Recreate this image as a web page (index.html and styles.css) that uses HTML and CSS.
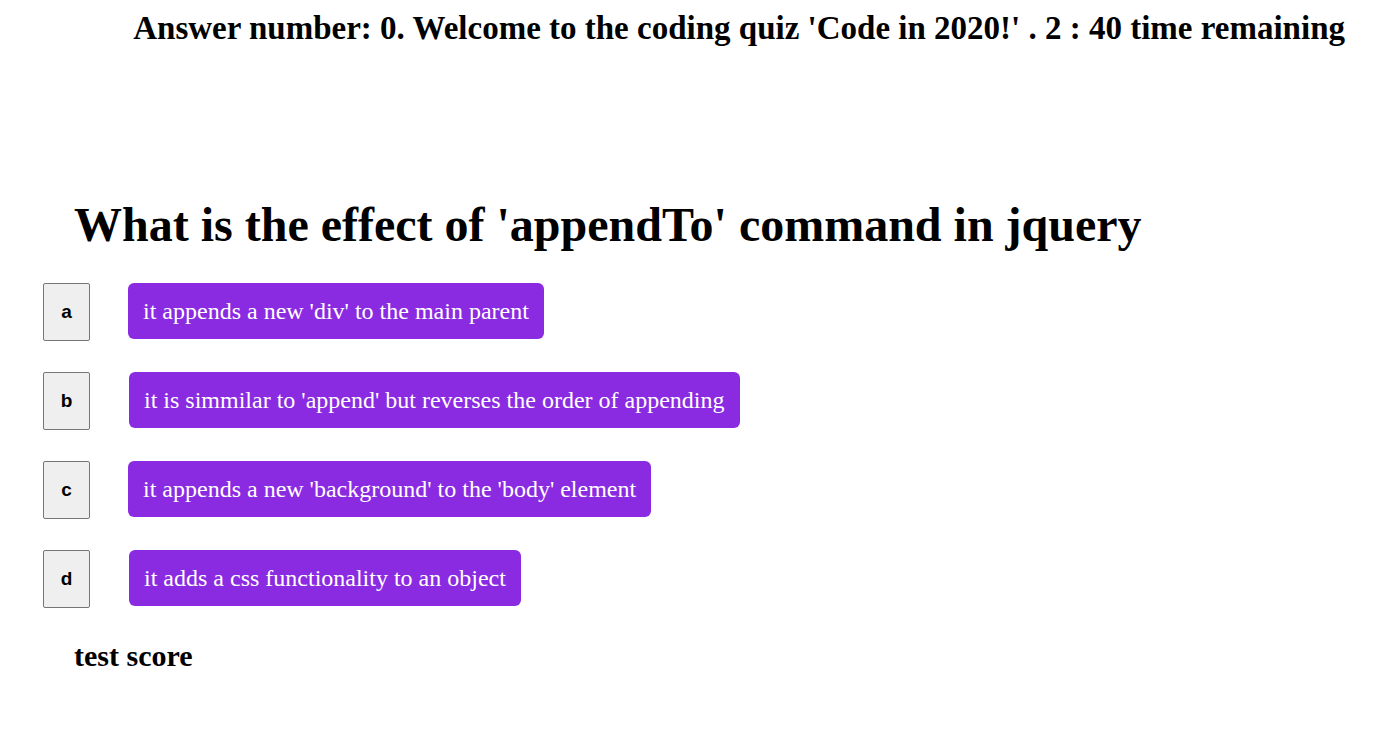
FILE: index.html
```html
<!DOCTYPE html>
<html>
<head>
<meta charset="utf-8">
<link rel="stylesheet" href="styles.css">
</head>
<body>
<header class="top">
  <h2 class="status">Answer number: 0. Welcome to the coding quiz 'Code in 2020!' . 2 : 40 time remaining</h2>
</header>
<main class="quiz">
  <h1 class="question">What is the effect of 'appendTo' command in jquery</h1>
  <div class="options">
    <div class="row"><button class="letter">a</button><button class="answer">it appends a new 'div' to the main parent</button></div>
    <div class="row"><button class="letter">b</button><button class="answer shift">it is simmilar to 'append' but reverses the order of appending</button></div>
    <div class="row"><button class="letter">c</button><button class="answer">it appends a new 'background' to the 'body' element</button></div>
    <div class="row"><button class="letter">d</button><button class="answer shift">it adds a css functionality to an object</button></div>
  </div>
  <h3 class="score">test score</h3>
</main>
</body>
</html>
```
FILE: styles.css
```css
html, body {
  margin: 0;
  padding: 0;
  background: #fff;
  font-family: "Liberation Serif", "Times New Roman", serif;
  color: #000;
}
.top {
  display: flex;
  justify-content: flex-end;
  padding: 8px 43px 0 0;
}
.status {
  margin: 0;
  font-size: 33px;
  font-weight: bold;
  line-height: 40px;
  white-space: nowrap;
}
.quiz {
  padding: 149px 0 0 0;
}
.question {
  margin: 0 0 0 74px;
  font-size: 48px;
  font-weight: bold;
  line-height: 56px;
}
.options {
  display: flex;
  flex-direction: column;
  gap: 31px;
  padding: 30px 0 0 43px;
}
.row {
  display: flex;
  align-items: flex-start;
  gap: 38px;
}
.letter {
  width: 47px;
  height: 58px;
  margin: 0;
  padding: 0;
  background: #efefef;
  border: 1px solid #767676;
  border-radius: 2px;
  font-family: "Liberation Sans", Arial, sans-serif;
  font-size: 19px;
  font-weight: bold;
  color: #000;
}
.answer {
  height: 56px;
  margin: 0;
  padding: 0 15px;
  background: #8a2be2;
  border: none;
  border-radius: 6px;
  color: #fff;
  font-family: "Liberation Serif", "Times New Roman", serif;
  font-size: 24px;
}
.answer.shift {
  margin-left: 1px;
}
.score {
  margin: 31px 0 0 74px;
  font-size: 30px;
  font-weight: bold;
  line-height: 34px;
}
```
